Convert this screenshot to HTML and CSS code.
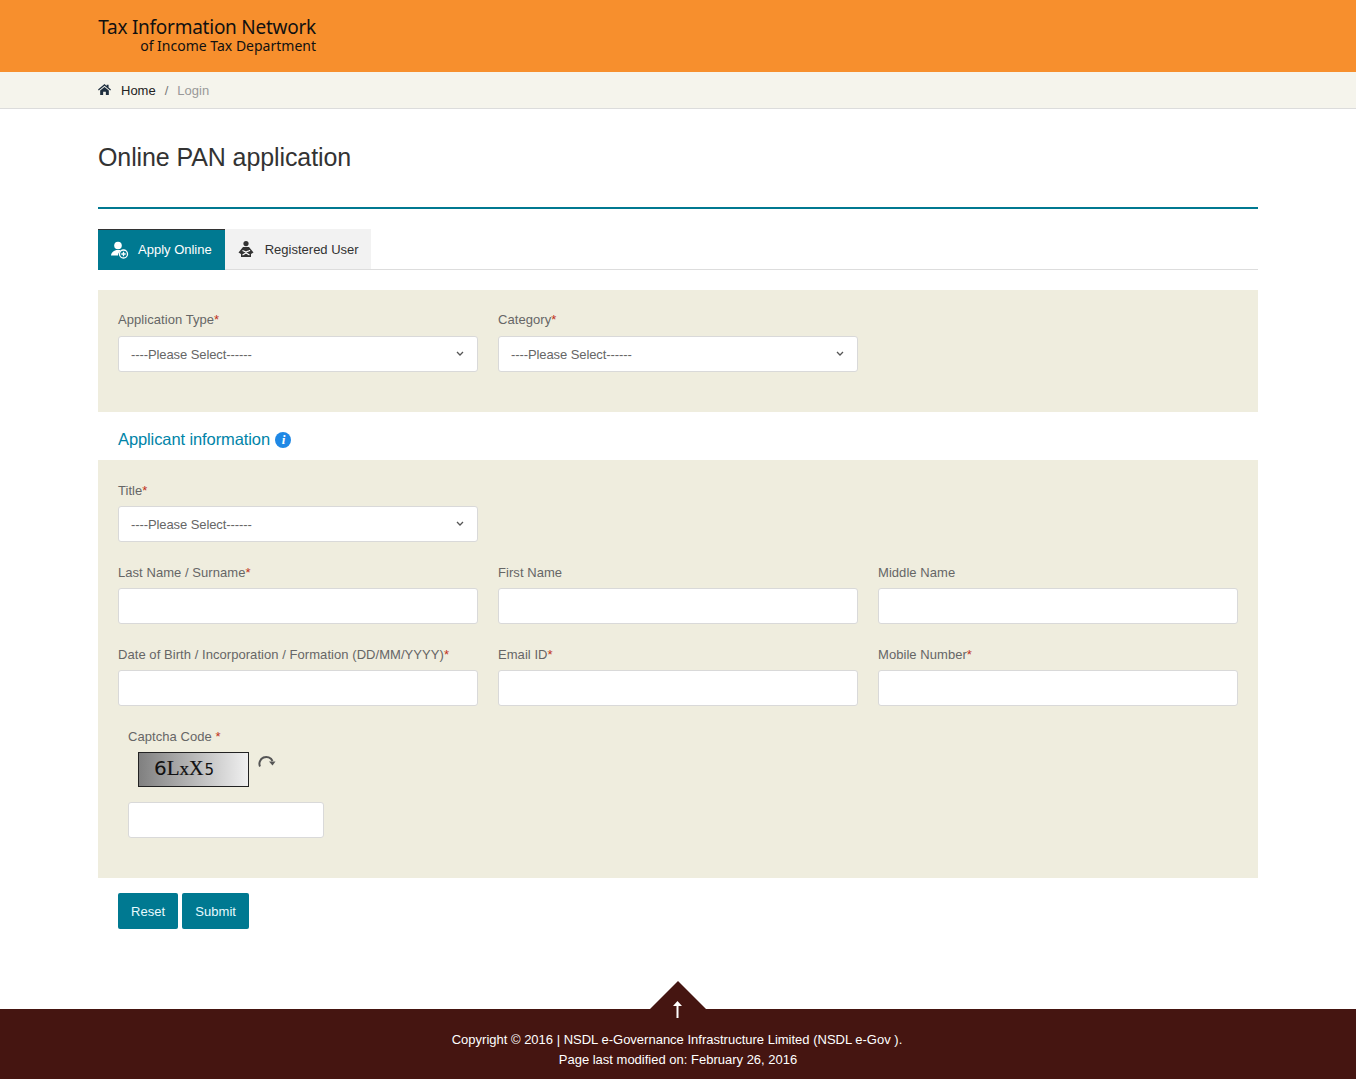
FILE: index.html
```html
<!DOCTYPE html>
<html lang="en">
<head>
  <meta charset="utf-8" />
  <title>Online PAN application</title>
  <link rel="stylesheet" href="styles.css">
</head>
<body>
  <header class="top">
    <div class="wrap brand">
      <div class="brand-main">Tax Information Network</div>
      <div class="brand-sub">of Income Tax Department</div>
    </div>
  </header>

  <nav class="crumbs">
    <div class="wrap crumbs-row">
      <svg class="home" viewBox="0 0 24 20" width="13" height="11"><path d="M12 0 L16 3.4 V1 H19.5 V6.4 L24 10.2 L22.6 11.8 L12 2.9 L1.4 11.8 L0 10.2 Z M4 12 L12 5.2 L20 12 V20 H14.5 V14 H9.5 V20 H4 Z" fill="#1f2f3f"/></svg>
      <a class="crumb-link">Home</a>
      <span class="crumb-sep">/</span>
      <span class="crumb-now">Login</span>
    </div>
  </nav>

  <main class="wrap">
    <h1 class="title">Online PAN application</h1>

    <div class="tabs">
      <div class="tab active">
        <svg viewBox="0 0 18 18" width="18" height="18"><circle cx="7" cy="4.5" r="3.8" fill="#fff"/><path d="M0 14.5 C0.5 11 3 10 5 9 L9 9 C9.5 9.5 10 10 10 10 C8 11 7 12.5 7 14.5 Z" fill="#fff"/><circle cx="12.5" cy="13" r="4" fill="#007991" stroke="#fff" stroke-width="1.3"/><path d="M12.5 10.8 V15.2 M10.3 13 H14.7" stroke="#fff" stroke-width="1.3"/></svg>
        Apply Online
      </div>
      <div class="tab">
        <svg class="reader" viewBox="0 0 16 16" width="16" height="16"><circle cx="8" cy="2.6" r="2.6" fill="#333"/><path d="M5 6 H11 L15.5 11.5 L13 13 V16 H3 V13 L0.5 11.5 Z" fill="#333"/><path d="M4.5 9.5 L8 11 L11.5 9.5 V9 M4.5 14 L8 12 L11.5 14" fill="none" stroke="#fff" stroke-width="1.2"/></svg>
        Registered User
      </div>
    </div>

    <section class="panel first">
      <div class="row">
        <div class="field">
          <label>Application Type<em>*</em></label>
          <div class="select"><select><option>----Please Select------</option></select><svg class="chev" viewBox="0 0 8 5" width="8" height="5"><path d="M1 1 L4 4 L7 1" fill="none" stroke="#555" stroke-width="1.3"/></svg></div>
        </div>
        <div class="field">
          <label>Category<em>*</em></label>
          <div class="select"><select><option>----Please Select------</option></select><svg class="chev" viewBox="0 0 8 5" width="8" height="5"><path d="M1 1 L4 4 L7 1" fill="none" stroke="#555" stroke-width="1.3"/></svg></div>
        </div>
      </div>
    </section>

    <h2 class="sub-head">Applicant information <span class="info">i</span></h2>

    <section class="panel second">
      <div class="row">
        <div class="field">
          <label>Title<em>*</em></label>
          <div class="select"><select><option>----Please Select------</option></select><svg class="chev" viewBox="0 0 8 5" width="8" height="5"><path d="M1 1 L4 4 L7 1" fill="none" stroke="#555" stroke-width="1.3"/></svg></div>
        </div>
      </div>
      <div class="row">
        <div class="field"><label>Last Name / Surname<em>*</em></label><input type="text"></div>
        <div class="field"><label>First Name</label><input type="text"></div>
        <div class="field"><label>Middle Name</label><input type="text"></div>
      </div>
      <div class="row">
        <div class="field"><label>Date of Birth / Incorporation / Formation (DD/MM/YYYY)<em>*</em></label><input type="text"></div>
        <div class="field"><label>Email ID<em>*</em></label><input type="text"></div>
        <div class="field"><label>Mobile Number<em>*</em></label><input type="text"></div>
      </div>
      <div class="captcha">
        <label>Captcha Code <em>*</em></label>
        <div class="captcha-row">
          <div class="captcha-img"><span class="c-six">6</span><span class="c-l">L</span><span class="c-x">x</span><span class="c-cap">X</span><span class="c-five">5</span></div>
          <svg class="reload" viewBox="0 0 18 18" width="18" height="18"><path d="M2 12.5 A6.8 6.8 0 0 1 14.5 7" fill="none" stroke="#555" stroke-width="2"/><path d="M11 7.5 H17.5 L14.5 11.5 Z" fill="#555"/></svg>
        </div>
        <input class="captcha-input" type="text">
      </div>
    </section>

    <div class="actions">
      <button class="btn">Reset</button>
      <button class="btn">Submit</button>
    </div>
  </main>

  <footer class="foot">
    <div class="to-top">
      <svg viewBox="0 0 9 17" width="9" height="17"><path d="M4.5 0 L9 5 H5.5 V17 H3.5 V5 H0 Z" fill="#fff"/></svg>
    </div>
    <p>Copyright &copy; 2016 | NSDL e-Governance Infrastructure Limited (NSDL e-Gov ).</p>
    <p class="modified">Page last modified on: February 26, 2016</p>
  </footer>
</body>
</html>
```

FILE: styles.css
```css
* { box-sizing: border-box; }
body { margin: 0; font-family: "Liberation Sans", Arial, sans-serif; font-size: 13px; color: #666; background: #fff; }
.wrap { width: 1160px; margin-left: 98px; }

.top { height: 72px; background: #f78f2d; }
.brand { width: 218px; padding-top: 16px; text-align: right; font-family: "Noto Sans", sans-serif; color: #111; }
.brand-main { font-size: 19px; line-height: 22px; white-space: nowrap; letter-spacing: -0.25px; }
.brand-sub { font-size: 14px; line-height: 16px; white-space: nowrap; }

.crumbs { height: 37px; background: #f5f4ec; border-bottom: 1px solid #dcdcdc; }
.crumbs-row { display: flex; align-items: center; height: 36px; }
.home { margin-right: 10px; margin-top: -2px; }
.crumb-link { color: #222; }
.crumb-sep { margin: 0 9px; color: #777; }
.crumb-now { color: #999; }

.title { margin: 0; height: 100px; padding-top: 32px; border-bottom: 2px solid #007991; font-size: 25px; line-height: 32px; font-weight: 400; color: #333; letter-spacing: -0.1px; }

.tabs { display: flex; margin-top: 20px; border-bottom: 1px solid #ddd; height: 41px; }
.tab { display: flex; align-items: center; gap: 11px; height: 40px; padding: 0 12px 0 13px; background: #f2f2f2; color: #333; }
.tab.active { background: #007991; color: #fff; border-top: 1px solid #333; height: 41px; gap: 9px; padding: 0 13px 1px; }

.panel { background: #efedde; padding: 20px; margin-top: 20px; }
.panel.first { height: 122px; }
.panel.second { height: 418px; margin-top: 0; }
.second .field label, .second .captcha label { padding-top: 1px; }
.row { display: grid; grid-template-columns: repeat(3, 360px); gap: 20px; margin-bottom: 20px; }
.field label, .captcha label { display: block; height: 26px; line-height: 20px; letter-spacing: 0.055px; }
em { font-style: normal; color: #c0311a; }

.select { position: relative; }
select, input { display: block; width: 100%; height: 36px; border: 1px solid #d9d9d9; border-radius: 3px; background: #fff; font: 13px "Liberation Sans", Arial, sans-serif; color: #666; padding: 0 12px; }
select { appearance: none; -webkit-appearance: none; letter-spacing: -0.09px; }
.chev { position: absolute; right: 14px; top: 15px; }

.sub-head { margin: 0; height: 48px; padding: 17px 0 0 20px; font-size: 16.5px; line-height: 20px; font-weight: 400; color: #0084a8; letter-spacing: -0.1px; }
.info { display: inline-block; width: 16px; height: 16px; margin-left: 1px; border-radius: 50%; background: #1f88e5; color: #fff; font: italic 700 13px/16px "Liberation Serif", serif; text-align: center; vertical-align: 1px; letter-spacing: 0; }

.captcha { padding-left: 10px; }
.captcha-row { display: flex; align-items: flex-start; gap: 9px; margin-left: 10px; height: 50px; }
.captcha-img { width: 111px; height: 35px; border: 1px solid #222; background: linear-gradient(to right, #808080, #f0f0f0); padding-left: 15px; line-height: 30px; color: #111; white-space: nowrap; }
.c-six, .c-five { font-family: "DejaVu Sans", sans-serif; }
.c-l, .c-x, .c-cap { font-family: "Liberation Serif", serif; -webkit-text-stroke: 0.2px #111; }
.c-six { font-size: 20px; }
.c-l { font-size: 21px; }
.c-x { font-size: 19px; }
.c-cap { font-size: 20px; margin-right: 1px; }
.c-five { font-size: 15px; }
.reload { margin-top: 2px; }
.captcha-input { width: 196px; }

.actions { display: flex; gap: 4px; padding: 15px 0 0 20px; }
.btn { height: 36px; padding: 0 13px; border: 0; border-radius: 2px; background: #007991; color: #e8fbff; font: 13px "Liberation Sans", Arial, sans-serif; letter-spacing: 0.05px; }

.foot { position: relative; margin-top: 80px; height: 70px; background: #451511; color: #fff; text-align: center; padding-top: 21px; }
.foot p { margin: 0; line-height: 20px; transform: translateX(-1px); }
.foot .modified { transform: none; }
.to-top { position: absolute; left: 650px; top: -28px; width: 56px; height: 28px; }
.to-top::before { content: ""; display: block; height: 28px; background: #451511; clip-path: polygon(50% 0, 100% 100%, 0 100%); }
.to-top svg { position: absolute; left: 23px; top: 20px; }
```
